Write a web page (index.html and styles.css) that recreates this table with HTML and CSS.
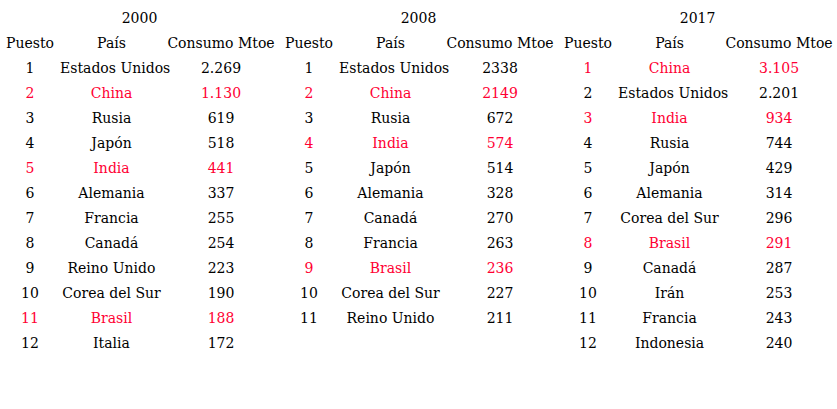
FILE: index.html
```html
<!DOCTYPE html>
<html lang="es">
<head>
<meta charset="utf-8">
<title>Consumo de energía</title>
<link rel="stylesheet" href="styles.css">
</head>
<body>
<div class="tables">
  <table class="rank">
    <colgroup><col class="c-pos"><col class="c-pais"><col class="c-cons"></colgroup>
    <thead>
      <tr><th colspan="3" class="year">2000</th></tr>
      <tr><th>Puesto</th><th>País</th><th>Consumo Mtoe</th></tr>
    </thead>
    <tbody>
      <tr><td>1</td><td>Estados Unidos</td><td>2.269</td></tr>
      <tr class="hl"><td>2</td><td>China</td><td>1.130</td></tr>
      <tr><td>3</td><td>Rusia</td><td>619</td></tr>
      <tr><td>4</td><td>Japón</td><td>518</td></tr>
      <tr class="hl"><td>5</td><td>India</td><td>441</td></tr>
      <tr><td>6</td><td>Alemania</td><td>337</td></tr>
      <tr><td>7</td><td>Francia</td><td>255</td></tr>
      <tr><td>8</td><td>Canadá</td><td>254</td></tr>
      <tr><td>9</td><td>Reino Unido</td><td>223</td></tr>
      <tr><td>10</td><td>Corea del Sur</td><td>190</td></tr>
      <tr class="hl"><td>11</td><td>Brasil</td><td>188</td></tr>
      <tr><td>12</td><td>Italia</td><td>172</td></tr>
    </tbody>
  </table>
  <table class="rank">
    <colgroup><col class="c-pos"><col class="c-pais"><col class="c-cons"></colgroup>
    <thead>
      <tr><th colspan="3" class="year">2008</th></tr>
      <tr><th>Puesto</th><th>País</th><th>Consumo Mtoe</th></tr>
    </thead>
    <tbody>
      <tr><td>1</td><td>Estados Unidos</td><td>2338</td></tr>
      <tr class="hl"><td>2</td><td>China</td><td>2149</td></tr>
      <tr><td>3</td><td>Rusia</td><td>672</td></tr>
      <tr class="hl"><td>4</td><td>India</td><td>574</td></tr>
      <tr><td>5</td><td>Japón</td><td>514</td></tr>
      <tr><td>6</td><td>Alemania</td><td>328</td></tr>
      <tr><td>7</td><td>Canadá</td><td>270</td></tr>
      <tr><td>8</td><td>Francia</td><td>263</td></tr>
      <tr class="hl"><td>9</td><td>Brasil</td><td>236</td></tr>
      <tr><td>10</td><td>Corea del Sur</td><td>227</td></tr>
      <tr><td>11</td><td>Reino Unido</td><td>211</td></tr>
    </tbody>
  </table>
  <table class="rank">
    <colgroup><col class="c-pos"><col class="c-pais"><col class="c-cons"></colgroup>
    <thead>
      <tr><th colspan="3" class="year">2017</th></tr>
      <tr><th>Puesto</th><th>País</th><th>Consumo Mtoe</th></tr>
    </thead>
    <tbody>
      <tr class="hl"><td>1</td><td>China</td><td>3.105</td></tr>
      <tr><td>2</td><td>Estados Unidos</td><td>2.201</td></tr>
      <tr class="hl"><td>3</td><td>India</td><td>934</td></tr>
      <tr><td>4</td><td>Rusia</td><td>744</td></tr>
      <tr><td>5</td><td>Japón</td><td>429</td></tr>
      <tr><td>6</td><td>Alemania</td><td>314</td></tr>
      <tr><td>7</td><td>Corea del Sur</td><td>296</td></tr>
      <tr class="hl"><td>8</td><td>Brasil</td><td>291</td></tr>
      <tr><td>9</td><td>Canadá</td><td>287</td></tr>
      <tr><td>10</td><td>Irán</td><td>253</td></tr>
      <tr><td>11</td><td>Francia</td><td>243</td></tr>
      <tr><td>12</td><td>Indonesia</td><td>240</td></tr>
    </tbody>
  </table>
</div>
</body>
</html>
```

FILE: styles.css
```css
html, body {
  margin: 0;
  padding: 0;
  background: #ffffff;
}

body {
  font-family: "DejaVu Serif", "Liberation Serif", serif;
  font-size: 14px;
  color: #000000;
}

.tables {
  display: flex;
  align-items: flex-start;
  padding-top: 5px;
}

.rank {
  width: 279px;
  border-collapse: collapse;
  table-layout: fixed;
  flex: none;
}

.rank .c-pos { width: 60px; }
.rank .c-pais { width: 103px; }
.rank .c-cons { width: 116px; }

.rank th,
.rank td {
  height: 25px;
  padding: 0;
  text-align: center;
  vertical-align: middle;
  font-weight: normal;
  white-space: nowrap;
}

.rank .hl td {
  color: #ff0033;
}
```
